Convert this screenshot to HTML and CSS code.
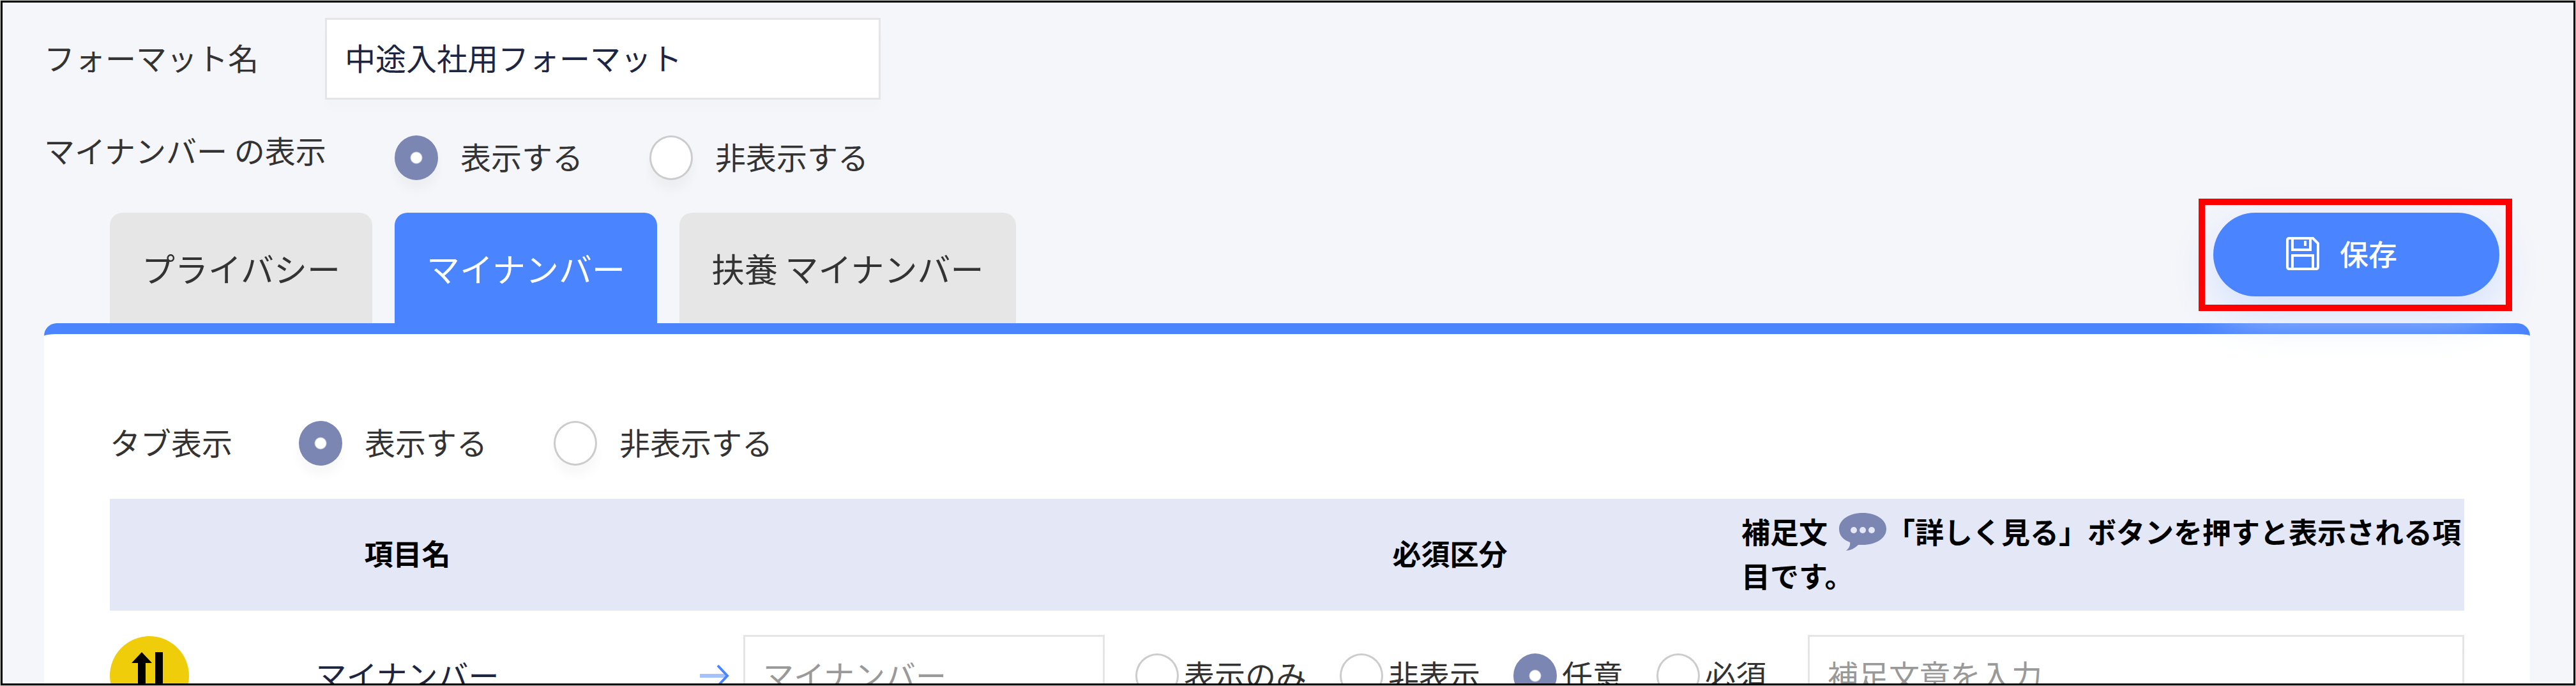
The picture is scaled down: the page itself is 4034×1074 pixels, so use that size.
FILE: index.html
```html
<!DOCTYPE html>
<html lang="ja">
<head>
  <meta charset="UTF-8" />
  <meta name="viewport" content="width=device-width, initial-scale=1.0"/>
  <title>フォーマット編集</title>
  <link rel="stylesheet" href="styles.css">
</head>
<body>

  <main class="page">
    <div class="form-row">
      <label class="form-label" for="formatName">フォーマット名</label>
      <input type="text" class="text-input format-name" id="formatName" value="中途入社用フォーマット" />
    </div>

    <div class="form-row number-row" role="radiogroup" aria-labelledby="numberLabel">
      <span class="number-label" id="numberLabel">マイナンバー の表示</span>
      <label class="option"><input type="radio" name="number" checked />表示する</label>
      <label class="option"><input type="radio" name="number" />非表示する</label>
    </div>

    <div class="toolbar">
      <nav class="tabs">
        <a class="tab" href="#privacy">プライバシー</a>
        <a class="tab active" href="#number">マイナンバー</a>
        <a class="tab" href="#dependent">扶養 マイナンバー</a>
      </nav>
      <div class="save-box">
        <button type="button" class="save-btn">
          <svg class="save-icon" viewBox="0 0 52 52" aria-hidden="true">
            <path d="M5 2H42L50 10V47Q50 50 47 50H5Q2 50 2 47V5Q2 2 5 2Z" />
            <path d="M10 3V20H38V3M10 49V29H42V49" />
            <path d="M30 6V14" />
          </svg>
          保存
        </button>
      </div>
    </div>

    <section class="panel">
      <div class="form-row" role="radiogroup" aria-labelledby="tabLabel">
        <span id="tabLabel">タブ表示</span>
        <label class="option"><input type="radio" name="tab" checked />表示する</label>
        <label class="option"><input type="radio" name="tab" />非表示する</label>
      </div>

      <table class="items">
        <colgroup>
          <col class="col-sort"><col class="col-name"><col class="col-input">
          <col class="col-required"><col class="col-space"><col>
        </colgroup>
        <thead>
          <tr>
            <th></th>
            <th>項目名</th>
            <th></th>
            <th class="required-head">必須区分</th>
            <th class="note-head" colspan="2">補足文<svg class="comment-icon" viewBox="0 0 74 60" aria-hidden="true">
              <path d="M37 0C57 0 74 10 74 25S57 50 37 50C34 50 32 50 30 50C25 55 18 59 11 59C15 56 18 51 17 46C6 42 0 35 0 25C0 10 17 0 37 0Z" />
              <circle cx="23" cy="27" r="5" /><circle cx="37" cy="27" r="5" /><circle cx="51" cy="27" r="5" />
            </svg>「詳しく見る」ボタンを押すと表示される項目です。</th>
          </tr>
        </thead>
        <tbody>
          <tr>
            <td>
              <button type="button" class="sort-btn" aria-label="並べ替え">
                <svg viewBox="0 0 124 124" aria-hidden="true">
                  <path d="M50 25L66 42H56V98H44V42H34ZM71 25H83V82H93L77 99L61 82H71Z" />
                </svg>
              </button>
            </td>
            <td class="name">マイナンバー</td>
            <td>
              <div class="input-cell">
                <svg class="arrow" viewBox="0 0 46 36" aria-hidden="true">
                  <path class="shaft" d="M0 18H42" />
                  <path d="M28 2L43 18L28 34" />
                </svg>
                <input type="text" class="text-input" placeholder="マイナンバー" aria-label="マイナンバー" />
              </div>
            </td>
            <td colspan="2">
              <div class="choices">
                <label class="choice"><input type="radio" name="required" />表示のみ</label>
                <label class="choice"><input type="radio" name="required" />非表示</label>
                <label class="choice"><input type="radio" name="required" checked />任意</label>
                <label class="choice"><input type="radio" name="required" />必須</label>
              </div>
            </td>
            <td><input type="text" class="text-input" placeholder="補足文章を入力" aria-label="補足文章" /></td>
          </tr>
        </tbody>
      </table>
    </section>
  </main>

</body>
</html>
```
FILE: styles.css
```css
* {
  box-sizing: border-box;
}

body {
  margin: 0;
  height: 100vh;
  padding: 1px;
  overflow: hidden;
  background: #ccd2cc;
  font-family: "Noto Sans CJK JP", sans-serif;
  font-size: 48px;
  line-height: 72px;
  color: #333;
}

input,
button {
  font: inherit;
  color: inherit;
}

.page {
  height: 100%;
  overflow: hidden;
  padding: 24px 68px 0 65px;
  border: 3px solid #000;
  background: #f5f6fa;
}

.form-row {
  display: flex;
  align-items: center;
}

.form-label {
  width: 440px;
  padding-bottom: 6px;
}

.text-input {
  width: 100%;
  height: 128px;
  padding: 0 28px 6px;
  border: 3px solid #e5e5e5;
  border-radius: 0;
  background: #fff;
  box-shadow: 0 16px 16px rgba(0, 0, 0, 0.01);
  color: #1c2541;
}

.text-input::placeholder {
  color: #999;
  opacity: 1;
}

.format-name {
  width: 870px;
}

.number-row {
  margin-top: 42px;
}

.number-label {
  width: 445px;
  padding-bottom: 20px;
}

.option {
  display: flex;
  align-items: center;
  gap: 35px;
  margin-left: 104px;
}

input[type="radio"] {
  appearance: none;
  flex: none;
  width: 68px;
  height: 70px;
  margin: 6px 0 0;
  border: 3px solid #ccc;
  border-radius: 50%;
  background: #fff;
  box-shadow: 0 16px 16px rgba(0, 0, 0, 0.03);
}

input[type="radio"]:checked {
  border-color: #7b86b2;
  background: radial-gradient(circle, #fff 8px, #7b86b2 10px);
}

/* Tabs and save button */
.toolbar {
  display: flex;
  justify-content: space-between;
  align-items: flex-start;
  margin-top: 21px;
  padding: 0 28px 0 103px;
}

.tabs {
  display: flex;
  gap: 35px;
  padding-top: 22px;
}

.tab {
  height: 173px;
  padding: 0 50px;
  border-radius: 20px 20px 0 0;
  background: #e6e6e6;
  color: #333;
  font-size: 52px;
  line-height: 173px;
  text-decoration: none;
}

.tab.active {
  background: #4a84ff;
  color: #fff;
}

.save-box {
  position: relative;
  padding: 22px 20px 23px 23px;
}

/* red frame stays above the button's glow */
.save-box::after {
  content: "";
  position: absolute;
  inset: 0;
  border: 10px solid #f00;
  pointer-events: none;
}

.save-btn {
  display: flex;
  align-items: center;
  justify-content: center;
  gap: 32px;
  width: 448px;
  height: 131px;
  padding: 0 46px 4px 0;
  border: none;
  border-radius: 66px;
  background: #4a84ff;
  box-shadow: 0 24px 72px #d0dfff;
  color: #fff;
  font-size: 45px;
  font-weight: 500;
  cursor: pointer;
}

.save-icon {
  width: 52px;
  height: 52px;
  fill: none;
  stroke: #fff;
  stroke-width: 4;
}

.panel {
  border-top: 17px solid #4a84ff;
  border-radius: 20px 20px 0 0;
  background: #fff;
  padding: 130px 103px 0;
}

/* Item table */
.items {
  width: 100%;
  margin-top: 52px;
  border-collapse: collapse;
  table-layout: fixed;
}

.items th {
  height: 175px;
  padding: 0 0 6px;
  background: #e4e7f6;
  color: #000;
  font-size: 45px;
  line-height: 69px;
}

.items td {
  padding: 38px 0;
}

.col-sort {
  width: 250px;
}

.col-name {
  width: 432px;
}

.col-input {
  width: 876px;
}

.col-required {
  width: 997px;
}

.col-space {
  width: 104px;
}

.items .required-head {
  padding-left: 84px;
}

.items .note-head {
  text-align: left;
}

.comment-icon {
  width: 74px;
  height: 60px;
  margin-left: 18px;
  vertical-align: -12px;
  fill: #7b86b2;
}

.comment-icon circle {
  fill: #e4e7f6;
}

.sort-btn {
  display: block;
  width: 124px;
  height: 124px;
  padding: 0;
  border: none;
  border-radius: 50%;
  background: #f0cd0a;
  cursor: pointer;
}

.sort-btn svg {
  display: block;
}

.items .name {
  padding-bottom: 44px;
  text-align: center;
  color: #1c2541;
}

.input-cell {
  display: flex;
  align-items: center;
  justify-content: flex-end;
  gap: 22px;
}

.input-cell .text-input {
  width: 566px;
}

.arrow {
  width: 46px;
  height: 36px;
  fill: none;
  stroke: #4a84ff;
  stroke-width: 4;
}

.arrow .shaft {
  stroke: #a5c1ff;
  stroke-width: 6;
}

.choices {
  display: flex;
  gap: 52px;
  padding: 0 0 6px 48px;
}

.choice {
  display: flex;
  align-items: center;
  gap: 8px;
  white-space: nowrap;
}
```
